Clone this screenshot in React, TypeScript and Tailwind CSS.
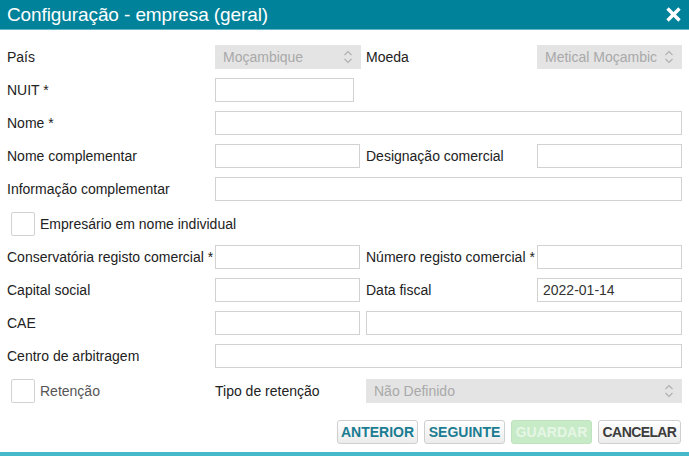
import { ReactNode } from "react";

const font = { fontFamily: '"Liberation Sans", Arial, sans-serif' };

function Label({ children, className = "" }: { children: ReactNode; className?: string }) {
  return <div className={`text-[14px] text-[#222] whitespace-nowrap ${className}`}>{children}</div>;
}

function Input({ className = "", value = "" }: { className?: string; value?: string }) {
  return (
    <div
      className={`h-[24px] border border-[#d2d2d2] bg-white px-[5px] flex items-center text-[14px] text-[#333] ${className}`}
    >
      {value}
    </div>
  );
}

function Arrows() {
  return (
    <svg width="10" height="14" viewBox="0 0 10 14" fill="none" stroke="#b0b0b0" strokeWidth="1.1">
      <path d="M1.5 5 L5 1.5 L8.5 5" />
      <path d="M1.5 9 L5 12.5 L8.5 9" />
    </svg>
  );
}

function Select({ value, className = "" }: { value: string; className?: string }) {
  return (
    <div
      className={`h-[24px] bg-[#e4e4e4] flex items-center justify-between pl-[8px] pr-[8px] text-[14px] text-[#a9a9a9] ${className}`}
    >
      <span className="whitespace-nowrap overflow-hidden">{value}</span>
      <Arrows />
    </div>
  );
}

function Checkbox() {
  return <div className="w-[24px] h-[24px] border border-[#d2d2d2] rounded-[2px] bg-white shrink-0" />;
}

function Button({
  children,
  variant = "teal",
  className = "",
}: {
  children: ReactNode;
  variant?: "teal" | "disabled" | "plain";
  className?: string;
}) {
  const tone =
    variant === "teal"
      ? "text-[#1b7c92] bg-gradient-to-b from-white to-[#ececec] border-[#cfcfcf]"
      : variant === "disabled"
        ? "text-[#e6f6e6] bg-[#c7ebc7] border-[#bfe3bf]"
        : "text-[#3d3d3d] bg-gradient-to-b from-white to-[#ececec] border-[#cfcfcf]";
  return (
    <button
      className={`h-[24px] border rounded-[3px] text-[14px] font-bold leading-none text-center whitespace-nowrap ${tone} ${className}`}
    >
      {children}
    </button>
  );
}

const row = "grid grid-cols-[208px_151px_171px_145px] items-center h-[24px]";

export default function App() {
  return (
    <div style={font} className="w-[689px] h-[456px] bg-white flex flex-col overflow-hidden">
      {/* title bar */}
      <div className="h-[30px] bg-[#00829a] border-b border-[#63b5c4] flex items-center justify-between pl-[7px] pr-[8px] shrink-0">
        <h1 className="text-[19px] text-white leading-none tracking-[-0.1px]">Configuração - empresa (geral)</h1>
        <svg width="15" height="15" viewBox="0 0 15 15" stroke="white" strokeWidth="3.4" strokeLinecap="butt">
          <path d="M1.5 1.5 L13.5 13.5 M13.5 1.5 L1.5 13.5" />
        </svg>
      </div>

      {/* form body */}
      <div className="flex-1 flex flex-col pt-[15px] pl-[7px] pr-[7px] gap-[9px]">
        <div className={row}>
          <Label>País</Label>
          <Select value="Moçambique" className="w-[146px]" />
          <Label>Moeda</Label>
          <Select value="Metical Moçambic" />
        </div>

        <div className={row}>
          <Label>NUIT *</Label>
          <Input className="w-[139px]" />
        </div>

        <div className={row}>
          <Label>Nome *</Label>
          <Input className="col-span-3" />
        </div>

        <div className={row}>
          <Label>Nome complementar</Label>
          <Input className="w-[145px]" />
          <Label>Designação comercial</Label>
          <Input />
        </div>

        <div className={row}>
          <Label>Informação complementar</Label>
          <Input className="col-span-3" />
        </div>

        <div className="flex items-center gap-[5px] h-[24px] pl-[4px] mt-[2px]">
          <Checkbox />
          <Label>Empresário em nome individual</Label>
        </div>

        <div className={row}>
          <Label>Conservatória registo comercial *</Label>
          <Input className="w-[145px]" />
          <Label>Número registo comercial *</Label>
          <Input />
        </div>

        <div className={row}>
          <Label>Capital social</Label>
          <Input className="w-[145px]" />
          <Label>Data fiscal</Label>
          <Input value="2022-01-14" />
        </div>

        <div className={row}>
          <Label>CAE</Label>
          <Input className="w-[145px]" />
          <Input className="col-span-2" />
        </div>

        <div className={row}>
          <Label>Centro de arbitragem</Label>
          <Input className="col-span-3" />
        </div>

        <div className={`${row} mt-[2px]`}>
          <div className="flex items-center gap-[5px] pl-[4px]">
            <Checkbox />
            <Label className="text-[#555]">Retenção</Label>
          </div>
          <Label>Tipo de retenção</Label>
          <Select value="Não Definido" className="col-span-2" />
        </div>

        {/* actions */}
        <div className="flex justify-end gap-[6px] pr-[1px] mt-[8px]">
          <Button className="w-[81px]">ANTERIOR</Button>
          <Button className="w-[81px]">SEGUINTE</Button>
          <Button variant="disabled" className="w-[81px]">
            GUARDAR
          </Button>
          <Button variant="plain" className="w-[83px] tracking-[-0.6px]">
            CANCELAR
          </Button>
        </div>
      </div>

      <div className="h-[4px] bg-[#45b9ca] shrink-0" />
    </div>
  );
}
